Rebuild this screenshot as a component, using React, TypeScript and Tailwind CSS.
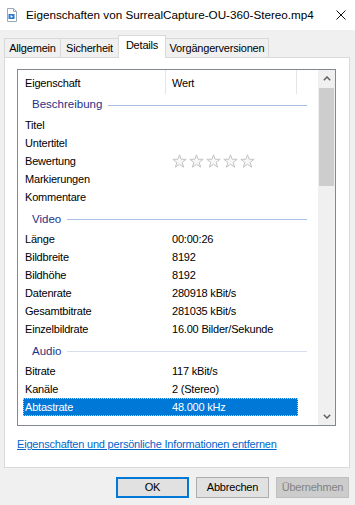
import React from 'react';

interface Prop {
  label: string;
  value?: string;
  stars?: boolean;
  selected?: boolean;
}

interface Group {
  title: string;
  line: string;
  rows: Prop[];
}

const GROUPS: Group[] = [
  {
    title: 'Beschreibung',
    line: 'bg-[#a9bfe8]',
    rows: [
      { label: 'Titel' },
      { label: 'Untertitel' },
      { label: 'Bewertung', stars: true },
      { label: 'Markierungen' },
      { label: 'Kommentare' },
    ],
  },
  {
    title: 'Video',
    line: 'bg-[#a9bfe8]',
    rows: [
      { label: 'Länge', value: '00:00:26' },
      { label: 'Bildbreite', value: '8192' },
      { label: 'Bildhöhe', value: '8192' },
      { label: 'Datenrate', value: '280918 kBit/s' },
      { label: 'Gesamtbitrate', value: '281035 kBit/s' },
      { label: 'Einzelbildrate', value: '16.00 Bilder/Sekunde' },
    ],
  },
  {
    title: 'Audio',
    line: 'bg-[#d6e0f0]',
    rows: [
      { label: 'Bitrate', value: '117 kBit/s' },
      { label: 'Kanäle', value: '2 (Stereo)' },
      { label: 'Abtastrate', value: '48.000 kHz', selected: true },
    ],
  },
  {
    title: 'Medien',
    line: 'bg-[#a9bfe8]',
    rows: [],
  },
];

const TABS = [
  { name: 'Allgemein', w: 'w-[57px]' },
  { name: 'Sicherheit', w: 'w-[59px]' },
  { name: 'Details', w: 'w-[48px]', active: true },
  { name: 'Vorgängerversionen', w: 'w-[104px]' },
];

function Star() {
  return (
    <svg width="15" height="15" viewBox="0 0 15 15">
      <path
        d="M7.5 0.8 L9.15 5.24 L14.16 5.34 L10.16 8.37 L11.61 13.16 L7.5 10.3 L3.39 13.16 L4.84 8.37 L0.84 5.34 L5.85 5.24 Z"
        fill="#f7f7f7"
        stroke="#c3c3c3"
        strokeWidth="1"
        strokeLinejoin="round"
      />
    </svg>
  );
}

function FileIcon() {
  return (
    <svg width="12" height="14" viewBox="0 0 12 14">
      <path d="M1.5 0.5h6l3 3v10h-9z" fill="#ffffff" stroke="#9aa7b6" />
      <path d="M7.5 0.5v3h3" fill="none" stroke="#9aa7b6" />
      <rect x="2.5" y="6" width="6" height="5" fill="#2a7bd2" />
      <path d="M4.6 7.1 L7 8.5 L4.6 9.9 Z" fill="#ffffff" />
    </svg>
  );
}

function PropRow({ row }: { row: Prop }) {
  return (
    <div
      className={`ml-[5px] w-[275px] h-[18px] flex items-center border border-dotted ${
        row.selected ? 'bg-[#0078d7] text-white border-[#f2c37c]' : 'border-transparent text-black'
      }`}
    >
      <div className="w-[148px] pl-[1px]">{row.label}</div>
      <div className="flex-1">
        {row.stars ? (
          <div className="flex gap-[2px]">
            <Star />
            <Star />
            <Star />
            <Star />
            <Star />
          </div>
        ) : (
          row.value
        )}
      </div>
    </div>
  );
}

export default function App() {
  return (
    <div className="w-[355px] h-[505px] bg-[#f0f0f0] flex flex-col overflow-hidden font-['Liberation_Sans',Arial,sans-serif] text-[11px] tracking-[-0.2px] text-black">
      {/* title bar */}
      <div className="h-[30px] bg-white flex items-center shrink-0">
        <div className="ml-[6px] w-[12px] flex">
          <FileIcon />
        </div>
        <div className="ml-[8px] text-[11.7px] tracking-normal flex-1">
          Eigenschaften von SurrealCapture-OU-360-Stereo.mp4
        </div>
        <svg width="10" height="10" viewBox="0 0 10 10" className="mr-[9px]">
          <path d="M0.5 0.5 L9.5 9.5 M9.5 0.5 L0.5 9.5" stroke="#111" strokeWidth="1" />
        </svg>
      </div>

      {/* tabs */}
      <div className="h-[27px] flex items-end pl-[4px] shrink-0">
        {TABS.map((t, i) =>
          t.active ? (
            <div
              key={t.name}
              className={`${t.w} h-[23px] -ml-px -mb-px relative z-10 bg-white border border-b-0 border-[#d9d9d9] flex items-center justify-center pb-[3px]`}
            >
              {t.name}
            </div>
          ) : (
            <div
              key={t.name}
              className={`${t.w} h-[19px] ${i > 0 ? '-ml-px' : ''} bg-[#f0f0f0] border border-b-0 border-[#d9d9d9] flex items-center justify-center`}
            >
              {t.name}
            </div>
          )
        )}
      </div>

      {/* panel */}
      <div className="ml-[4px] w-[346px] h-[411px] bg-white border border-[#d9d9d9] pt-[11px] pl-[12px] flex flex-col shrink-0">
        <div className="w-[319px] h-[357px] border border-[#828790] flex">
          <div className="flex-1 overflow-hidden">
            {/* column header */}
            <div className="h-[24px] flex">
              <div className="w-[148px] pl-[7px] pt-[2px] flex items-center border-r border-[#e5e5e5]">
                Eigenschaft
              </div>
              <div className="w-[131px] pl-[6px] pt-[2px] flex items-center border-r border-[#e5e5e5]">
                Wert
              </div>
            </div>

            {GROUPS.map((g, gi) => (
              <div key={g.title}>
                <div className={`${gi === 0 ? 'h-[22px]' : 'h-[24px] pt-[3px]'} flex items-center pl-[14px] pr-[11px]`}>
                  <span className="text-[11.5px] tracking-normal text-[#1e3287]">{g.title}</span>
                  <div className={`flex-1 h-px ml-[6px] ${g.line}`} />
                </div>
                {g.rows.map((r) => (
                  <PropRow key={r.label} row={r} />
                ))}
              </div>
            ))}
          </div>

          {/* scrollbar */}
          <div className="w-[17px] bg-[#f0f0f0] flex flex-col">
            <div className="h-[17px] flex items-center justify-center">
              <svg width="8" height="5" viewBox="0 0 8 5">
                <path d="M0.8 4.2 L4 1 L7.2 4.2" fill="none" stroke="#606060" strokeWidth="1.5" />
              </svg>
            </div>
            <div className="mt-px mx-px h-[98px] bg-[#cdcdcd]" />
            <div className="flex-1" />
            <div className="h-[17px] flex items-center justify-center">
              <svg width="8" height="5" viewBox="0 0 8 5">
                <path d="M0.8 0.8 L4 4 L7.2 0.8" fill="none" stroke="#606060" strokeWidth="1.5" />
              </svg>
            </div>
          </div>
        </div>

        <div className="mt-[12px] leading-[13px] text-[#0066cc] underline">
          Eigenschaften und persönliche Informationen entfernen
        </div>
      </div>

      {/* buttons */}
      <div className="mt-[9px] flex justify-end gap-[7px] pr-[6px]">
        <button className="w-[73px] h-[21px] bg-[#e1e1e1] border-2 border-[#0078d7] text-black">OK</button>
        <button className="w-[73px] h-[21px] bg-[#e1e1e1] border border-[#adadad] text-black">Abbrechen</button>
        <button className="w-[73px] h-[21px] bg-[#cccccc] border border-[#bfbfbf] text-[#838383]">Übernehmen</button>
      </div>
    </div>
  );
}
